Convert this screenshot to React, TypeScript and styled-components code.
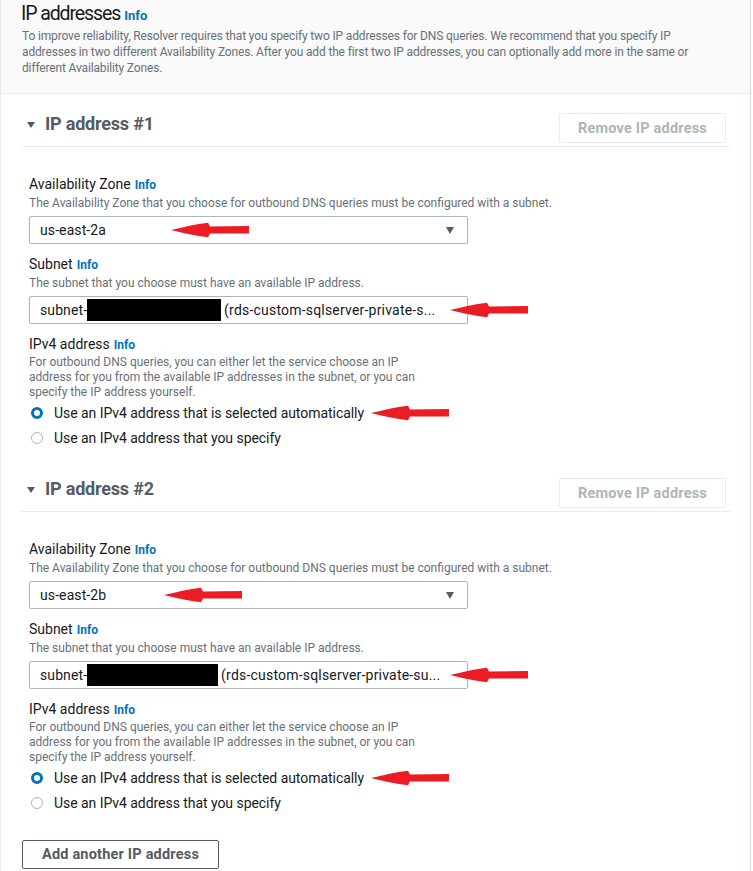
import React from "react";
import styled, { createGlobalStyle } from "styled-components";

const Global = createGlobalStyle`
  html, body { margin: 0; padding: 0; background: #ffffff; }
  body { font-family: Roboto, "Noto Sans", "Liberation Sans", sans-serif; color: #16191f; }
  * { box-sizing: border-box; }
`;

const Container = styled.div`
  width: 751px;
  border-left: 1px solid #eaeded;
  border-right: 1px solid #d5dbdb;
  background: #fff;
`;

const HeaderPanel = styled.div`
  background: #fafafa;
  border-bottom: 1px solid #eaeded;
  padding: 2px 30px 18px 20px;
  height: 94px;
`;

const Title = styled.h2`
  margin: 0;
  font-size: 19.5px;
  line-height: 24px;
  font-weight: 400;
  color: #16191f;
  letter-spacing: -1.1px;
`;

const InfoLink = styled.a<{ $size?: number }>`
  color: #0073bb;
  font-weight: 700;
  font-size: ${(p) => p.$size ?? 12}px;
  margin-left: 4px;
  text-decoration: none;
  letter-spacing: 0;
`;

const HeaderDesc = styled.p`
  margin: 0 0 0 1px;
  font-size: 12px;
  line-height: 16px;
  color: #687078;
  letter-spacing: -0.15px;
`;

const Body = styled.div`
  padding: 19px 20px 4px 20px;
  display: flex;
  flex-direction: column;
`;

const Section = styled.section`
  display: flex;
  flex-direction: column;
  margin-bottom: 28px;
  &:nth-of-type(2) {
    margin-bottom: 25px;
  }
`;

const SectionHead = styled.div`
  display: flex;
  align-items: flex-start;
  justify-content: space-between;
  padding: 0 4px 0 6px;
  height: 30px;
`;

const SectionTitle = styled.h3`
  margin: 0;
  display: flex;
  align-items: center;
  gap: 10px;
  font-size: 18px;
  line-height: 22px;
  font-weight: 700;
  color: #545b64;
  letter-spacing: -0.2px;
`;

const Caret = styled.span`
  width: 0;
  height: 0;
  border-left: 4.5px solid transparent;
  border-right: 4.5px solid transparent;
  border-top: 6px solid #545b64;
  margin-top: 1px;
`;

const DisabledButton = styled.button`
  width: 167px;
  height: 30px;
  background: #fff;
  border: 1px solid #eaeded;
  border-radius: 2px;
  color: #aab7b8;
  font-family: inherit;
  font-size: 14.5px;
  font-weight: 700;
  letter-spacing: 0.2px;
`;

const Divider = styled.hr`
  margin: 3px 0 0 0;
  border: none;
  border-top: 1px solid #eaeded;
`;

const Fields = styled.div`
  padding: 27px 0 0 8px;
  display: flex;
  flex-direction: column;
`;

const Field = styled.div<{ $gap?: number }>`
  display: flex;
  flex-direction: column;
  margin-bottom: ${(p) => p.$gap ?? 10}px;
`;

const Label = styled.label`
  font-size: 14px;
  line-height: 20px;
  color: #16191f;
  letter-spacing: 0;
`;

const Desc = styled.div<{ $lh?: number; $width?: number }>`
  font-size: 12px;
  line-height: ${(p) => p.$lh ?? 16}px;
  color: #687078;
  letter-spacing: 0;
  max-width: ${(p) => (p.$width ? `${p.$width}px` : "none")};
`;

const Control = styled.div`
  position: relative;
  margin-top: 5px;
  width: 439px;
  height: 28px;
  border: 1px solid #aab7b8;
  border-radius: 2px;
  padding: 0 10px;
  display: flex;
  align-items: center;
  font-size: 14px;
  color: #16191f;
  letter-spacing: 0.1px;
  white-space: nowrap;
`;

const SubnetName = styled.span`
  letter-spacing: 0.2px;
`;

const SelectCaret = styled.span`
  position: absolute;
  right: 13px;
  top: 10px;
  width: 0;
  height: 0;
  border-left: 4.5px solid transparent;
  border-right: 4.5px solid transparent;
  border-top: 7px solid #545b64;
`;

const Redacted = styled.span<{ $w: number }>`
  display: inline-block;
  width: ${(p) => p.$w}px;
  height: 22px;
  background: #000;
  margin-right: 3px;
`;

const RadioGroup = styled.div`
  display: flex;
  flex-direction: column;
`;

const RadioRow = styled.div`
  position: relative;
  height: 25px;
  display: flex;
  align-items: center;
  gap: 11px;
  font-size: 14px;
  color: #16191f;
  letter-spacing: -0.05px;
  padding-left: 2px;
`;

const RadioDot = styled.span<{ $checked?: boolean }>`
  width: 12px;
  height: 12px;
  border-radius: 50%;
  background: #fff;
  border: ${(p) => (p.$checked ? "3.5px solid #0073bb" : "1px solid #aab7b8")};
`;

const AddButton = styled.button`
  align-self: flex-start;
  margin-left: 1px;
  width: 197px;
  height: 29px;
  background: #fff;
  border: 1px solid #545b64;
  border-radius: 2px;
  color: #545b64;
  font-family: inherit;
  font-size: 14.5px;
  font-weight: 700;
  letter-spacing: 0.2px;
`;

const ArrowSvg = styled.svg<{ $left: number }>`
  position: absolute;
  left: ${(p) => p.$left}px;
  top: 50%;
  margin-top: -8px;
  width: 78px;
  height: 16px;
  overflow: visible;
`;

const RedArrow: React.FC<{ left: number }> = ({ left }) => (
  <ArrowSvg $left={left} viewBox="0 0 80 16">
    <path
      d="M0 8 C12 5 26 2 38 0.5 L40 4.5 L80 4 L80 11.5 L40 11.5 L38 15.5 C26 14 12 11 0 8 Z"
      fill="#ec1c24"
    />
  </ArrowSvg>
);

type IPProps = { n: number; zone: string; redact: number; subnet: string; zoneArrow: number };

const IPSection: React.FC<IPProps> = ({ n, zone, redact, subnet, zoneArrow }) => (
  <Section>
    <SectionHead>
      <SectionTitle>
        <Caret />
        IP address #{n}
      </SectionTitle>
      <DisabledButton disabled>Remove IP address</DisabledButton>
    </SectionHead>
    <Divider />
    <Fields>
      <Field>
        <Label>
          Availability Zone<InfoLink>Info</InfoLink>
        </Label>
        <Desc>The Availability Zone that you choose for outbound DNS queries must be configured with a subnet.</Desc>
        <Control>
          {zone}
          <SelectCaret />
          <RedArrow left={zoneArrow} />
        </Control>
      </Field>
      <Field>
        <Label>
          Subnet<InfoLink>Info</InfoLink>
        </Label>
        <Desc>The subnet that you choose must have an available IP address.</Desc>
        <Control>
          subnet-
          <Redacted $w={redact} />
          <SubnetName>{subnet}</SubnetName>
          <RedArrow left={420} />
        </Control>
      </Field>
      <Field $gap={0}>
        <Label>
          IPv4 address<InfoLink>Info</InfoLink>
        </Label>
        <Desc $lh={15} $width={395}>
          For outbound DNS queries, you can either let the service choose an IP address for you from the available IP
          addresses in the subnet, or you can specify the IP address yourself.
        </Desc>
        <RadioGroup>
          <RadioRow>
            <RadioDot $checked />
            Use an IPv4 address that is selected automatically
            <RedArrow left={342} />
          </RadioRow>
          <RadioRow>
            <RadioDot />
            Use an IPv4 address that you specify
          </RadioRow>
        </RadioGroup>
      </Field>
    </Fields>
  </Section>
);

export default function App() {
  return (
    <>
      <Global />
      <Container>
        <HeaderPanel>
          <Title>
            IP addresses<InfoLink $size={13}>Info</InfoLink>
          </Title>
          <HeaderDesc>
            To improve reliability, Resolver requires that you specify two IP addresses for DNS queries. We recommend
            that you specify IP addresses in two different Availability Zones. After you add the first two IP addresses,
            you can optionally add more in the same or different Availability Zones.
          </HeaderDesc>
        </HeaderPanel>
        <Body>
          <IPSection n={1} zone="us-east-2a" redact={134} subnet="(rds-custom-sqlserver-private-s..." zoneArrow={141} />
          <IPSection n={2} zone="us-east-2b" redact={131} subnet="(rds-custom-sqlserver-private-su..." zoneArrow={134} />
          <AddButton>Add another IP address</AddButton>
        </Body>
      </Container>
    </>
  );
}
